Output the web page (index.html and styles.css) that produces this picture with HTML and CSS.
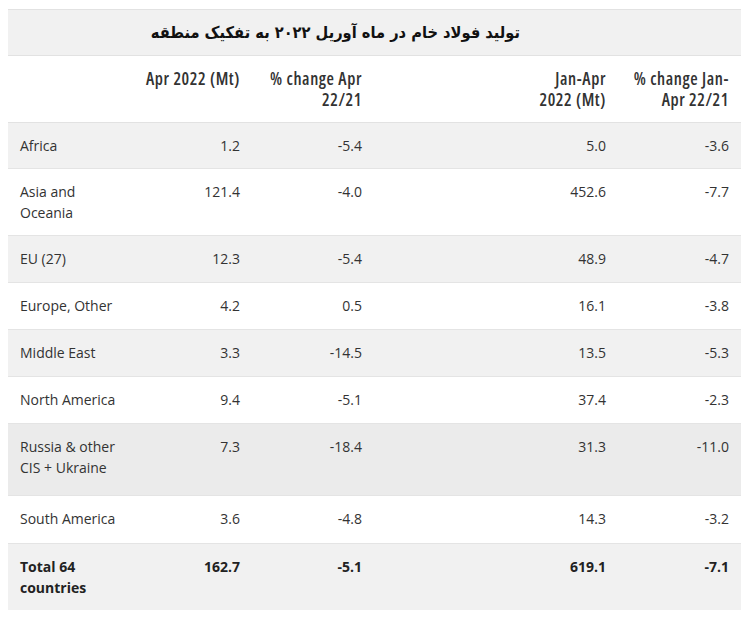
FILE: index.html
```
<!DOCTYPE html>
<html lang="en">
<head>
<meta charset="utf-8">
<link rel="stylesheet" href="styles.css">
</head>
<body>
<div class="wrap">
  <div class="title" dir="rtl">تولید فولاد خام در ماه آوریل ۲۰۲۲ به تفکیک منطقه</div>
  <table class="data">
    <colgroup>
      <col class="c1"><col class="c2"><col class="c3"><col class="c4"><col class="c5">
    </colgroup>
    <thead>
      <tr>
        <th></th>
        <th>Apr 2022 (Mt)</th>
        <th>% change Apr 22/21</th>
        <th>Jan-Apr<br>2022 (Mt)</th>
        <th>% change Jan-Apr 22/21</th>
      </tr>
    </thead>
    <tbody>
      <tr class="alt"><td>Africa</td><td>1.2</td><td>-5.4</td><td>5.0</td><td>-3.6</td></tr>
      <tr><td>Asia and Oceania</td><td>121.4</td><td>-4.0</td><td>452.6</td><td>-7.7</td></tr>
      <tr class="alt roomy"><td>EU (27)</td><td>12.3</td><td>-5.4</td><td>48.9</td><td>-4.7</td></tr>
      <tr class="roomy"><td>Europe, Other</td><td>4.2</td><td>0.5</td><td>16.1</td><td>-3.8</td></tr>
      <tr class="alt roomy"><td>Middle East</td><td>3.3</td><td>-14.5</td><td>13.5</td><td>-5.3</td></tr>
      <tr class="roomy"><td>North America</td><td>9.4</td><td>-5.1</td><td>37.4</td><td>-2.3</td></tr>
      <tr class="hover"><td>Russia &amp; other CIS + Ukraine</td><td>7.3</td><td>-18.4</td><td>31.3</td><td>-11.0</td></tr>
      <tr class="roomier"><td>South America</td><td>3.6</td><td>-4.8</td><td>14.3</td><td>-3.2</td></tr>
      <tr class="alt total"><td>Total 64 countries</td><td>162.7</td><td>-5.1</td><td>619.1</td><td>-7.1</td></tr>
    </tbody>
  </table>
</div>
</body>
</html>
```
FILE: styles.css
```
html, body {
  margin: 0;
  padding: 0;
  background: #ffffff;
}
body {
  padding: 9px 12px 0 8px;
  font-family: "Open Sans", "Liberation Sans", sans-serif;
  font-size: 14px;
  color: #333333;
}
.wrap {
  width: 733px;
}
.title {
  background: #f1f1f1;
  border-top: 1px solid #e2e2e2;
  border-bottom: 1px solid #e2e2e2;
  height: 45px;
  box-sizing: content-box;
  display: flex;
  align-items: center;
  justify-content: flex-start;
  padding-right: 221px;
  font-family: "DejaVu Sans Condensed", "DejaVu Sans", sans-serif;
  font-weight: bold;
  font-size: 16.3px;
  color: #111;
  line-height: 45px;
}
.data {
  width: 733px;
  border-collapse: collapse;
  table-layout: fixed;
}
.c1 { width: 126px; }
.c2 { width: 118px; }
.c3 { width: 122px; }
.c4 { width: 244px; }
.c5 { width: 123px; }
.data th, .data td {
  padding: 12px;
  line-height: 21px;
  vertical-align: top;
  text-align: right;
}
.data th {
  font-weight: 600;
  font-stretch: 75%;
  font-size: 17px;
  letter-spacing: 0.6px;
  color: #333;
  border-bottom: 1px solid #e2e2e2;
}
.data td:first-child {
  text-align: left;
}
.data tbody tr {
  border-bottom: 1px solid #e4e4e4;
}
.data tbody tr.alt {
  background: #f1f1f1;
}
.data tbody tr.roomy td {
  padding-bottom: 13px;
}
.data tbody tr.roomier td {
  padding-bottom: 14px;
}
.data tbody tr.hover {
  background: #ebebeb;
}
.data tbody tr.hover td {
  padding-bottom: 17px;
}
.data tbody tr.total {
  border-bottom: none;
  font-weight: 700;
  color: #222;
}
```
